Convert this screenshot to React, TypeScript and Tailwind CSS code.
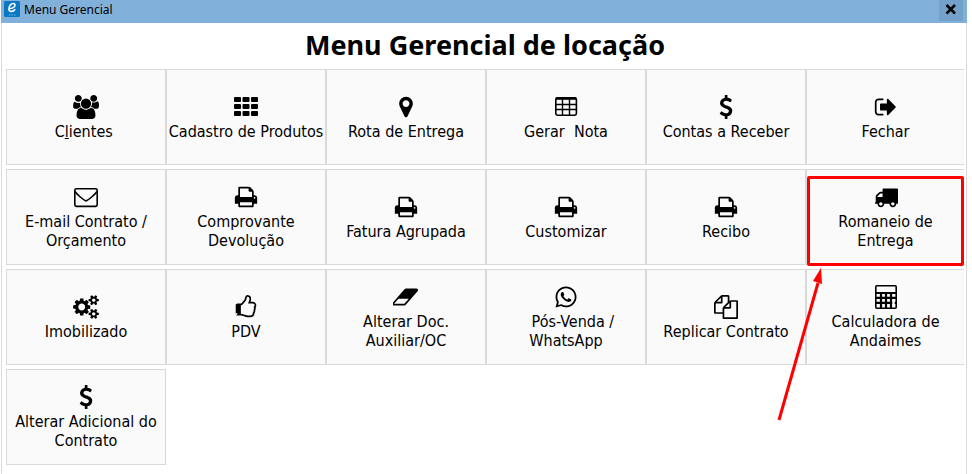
import type { ReactNode } from 'react';
import { FaWhatsapp } from 'react-icons/fa';

const FONT = "font-['Noto_Sans',Tahoma,sans-serif]";
const LABEL_FONT = "font-['DejaVu_Sans_Condensed',Tahoma,sans-serif]";

const Glyph = ({ d, wide = false }: { d: string; wide?: boolean }) => (
  <svg
    viewBox={wide ? '0 0 1920 1792' : '0 0 1792 1792'}
    className={wide ? 'h-6 w-[26px]' : 'h-6 w-6'}
    fill="currentColor"
    aria-hidden="true"
  >
    <path d={d} />
  </svg>
);

const UsersIcon = () => (
  <Glyph
    wide
    d="M593 896q-162 5-265 128h-134q-82 0-138-40.5t-56-118.5q0-353 124-353 6 0 43.5 21t97.5 42.5 119 21.5q67 0 133-23-5 37-5 66 0 159 93 293zm1071 637q0 120-73 189.5t-194 69.5h-874q-121 0-194-69.5t-73-189.5q0-53 3.5-103.5t14-109 26.5-108.5 43-97.5 62-81 85.5-53.5 111.5-20q10 0 43 21.5t73 48 107 48 135 21.5 135-21.5 107-48 73-48 43-21.5q61 0 111.5 20t85.5 53.5 62 81 43 97.5 26.5 108.5 14 109 3.5 103.5zm-1024-1277q0 106-75 181t-181 75-181-75-75-181 75-181 181-75 181 75 75 181zm704 384q0 159-112.5 271.5t-271.5 112.5-271.5-112.5-112.5-271.5 112.5-271.5 271.5-112.5 271.5 112.5 112.5 271.5zm576 225q0 78-56 118.5t-138 40.5h-134q-103-123-265-128 93-134 93-293 0-29-5-66 66 23 133 23 59 0 119-21.5t97.5-42.5 43.5-21q124 0 124 353zm-128-609q0 106-75 181t-181 75-181-75-75-181 75-181 181-75 181 75 75 181z"
  />
);

const GridIcon = () => (
  <svg viewBox="0 0 24 24" className="h-6 w-6" fill="currentColor" aria-hidden="true">
    {[2, 9, 16].map((y) =>
      [0, 8.5, 17].map((x) => <rect key={`${x}-${y}`} x={x} y={y} width="7" height="5" rx="1" />)
    )}
  </svg>
);

const PinIcon = () => (
  <Glyph d="M1152 640q0-106-75-181t-181-75-181 75-75 181 75 181 181 75 181-75 75-181zm256 0q0 109-33 179l-364 774q-16 33-47.5 52t-67.5 19-67.5-19-46.5-52l-365-774q-33-70-33-179 0-212 150-362t362-150 362 150 150 362z" />
);

const TableIcon = () => (
  <svg viewBox="0 0 24 24" className="h-6 w-6" fill="none" stroke="currentColor" aria-hidden="true">
    <rect x="1.8" y="2.8" width="20.6" height="17.4" rx="1.6" strokeWidth="1.6" />
    <path d="M2 3.6h20" strokeWidth="2.4" />
    <path d="M2 9.5h20M2 14.5h20M8.5 4v16M15.5 4v16" strokeWidth="1.4" />
  </svg>
);

const DollarIcon = () => (
  <Glyph d="M1362 1185q0 153-99.5 263.5t-258.5 136.5v175q0 14-9 23t-23 9h-135q-13 0-22.5-9.5t-9.5-22.5v-175q-66-9-127.5-31t-101.5-44.5-74-48-46.5-37.5-17.5-18q-17-21-2-41l103-135q7-10 23-12 15-2 24 9l2 2q113 99 243 125 37 8 74 8 81 0 142.5-43t61.5-122q0-28-15-53t-33.5-42-58.5-37.5-66-32-80-32.5q-39-16-61.5-25t-61.5-26.5-62.5-31-56.5-35.5-53.5-42.5-43.5-49-35.5-58-21-66.5-8.5-78q0-138 98-242t255-134v-180q0-13 9.5-22.5t22.5-9.5h135q14 0 23 9t9 23v176q57 6 110.5 23t87 33.5 63.5 37.5 39 29 15 14q17 18 5 38l-81 146q-8 15-23 16-14 3-27-7-3-3-14.5-12t-39-26.5-58.5-32-74.5-26-85.5-11.5q-95 0-155 43t-60 111q0 26 8.5 48t29.5 41.5 39.5 33 56 31 60.5 27 70 27.5q53 20 81 31.5t76 35 75.5 42.5 62 50 53 63.5 31.5 76.5 13 94z" />
);

const ExitIcon = () => (
  <Glyph d="M704 1440q0 4 1 20t.5 26.5-3 23.5-10 19.5-20.5 6.5h-320q-119 0-203.5-84.5t-84.5-203.5v-704q0-119 84.5-203.5t203.5-84.5h320q13 0 22.5 9.5t9.5 22.5q0 4 1 20t.5 26.5-3 23.5-10 19.5-20.5 6.5h-320q-66 0-113 47t-47 113v704q0 66 47 113t113 47h312l11.5 1 11.5 3 8 5.5 7 9 2 13.5zm928-544q0 26-19 45l-544 544q-19 19-45 19t-45-19-19-45v-288h-448q-26 0-45-19t-19-45v-384q0-26 19-45t45-19h448v-288q0-26 19-45t45-19 45 19l544 544q19 19 19 45z" />
);

const MailIcon = () => (
  <svg viewBox="0 0 24 24" className="h-6 w-6" fill="none" stroke="currentColor" strokeWidth="1.6" aria-hidden="true">
    <rect x="0.8" y="3.8" width="22.4" height="17.6" rx="1.6" />
    <path d="M1 6.5c2 3 8.5 8.5 11 9.5 2.5-1 9-6.5 11-9.5" />
  </svg>
);

const PrintIcon = () => (
  <Glyph d="M448 1536h896v-256h-896v256zm0-640h896v-384h-160q-40 0-68-28t-28-68v-160h-640v640zm1152 64q0-26-19-45t-45-19-45 19-19 45 19 45 45 19 45-19 19-45zm128 0v416q0 13-9.5 22.5t-22.5 9.5h-224v160q0 40-28 68t-68 28h-960q-40 0-68-28t-28-68v-160h-224q-13 0-22.5-9.5t-9.5-22.5v-416q0-79 56.5-135.5t135.5-56.5h64v-544q0-40 28-68t68-28h672q40 0 88 20t76 48l152 152q28 28 48 76t20 88v256h64q79 0 135.5 56.5t56.5 135.5z" />
);

const TruckIcon = () => (
  <Glyph d="M640 1408q0-52-38-90t-90-38-90 38-38 90 38 90 90 38 90-38 38-90zm-384-512h384v-256h-158q-13 0-22 9l-195 195q-9 9-9 22v30zm1280 512q0-52-38-90t-90-38-90 38-38 90 38 90 90 38 90-38 38-90zm256-1088v1024q0 15-4 26.5t-13.5 18.5-16.5 11.5-23.5 6-22.5 2-25.5 0-22.5-.5q0 106-75 181t-181 75-181-75-75-181h-384q0 106-75 181t-181 75-181-75-75-181h-64q-3 0-22.5.5t-25.5 0-22.5-2-23.5-6-16.5-11.5-13.5-18.5-4-26.5q0-26 19-45t45-19v-320q0-8-.5-35t0-38 2.5-34.5 6.5-37 14-30.5 22.5-30l198-198q19-19 50.5-32t58.5-13h160v-192q0-26 19-45t45-19h1024q26 0 45 19t19 45z" />
);

const CogsIcon = () => (
  <Glyph
    wide
    d="M896 896q0-106-75-181t-181-75-181 75-75 181 75 181 181 75 181-75 75-181zm768 512q0-52-38-90t-90-38-90 38-38 90q0 53 37.5 90.5t90.5 37.5 90.5-37.5 37.5-90.5zm0-1024q0-52-38-90t-90-38-90 38-38 90q0 53 37.5 90.5t90.5 37.5 90.5-37.5 37.5-90.5zm-384 421v185q0 10-7 19.5t-16 10.5l-155 24q-11 35-32 76 34 48 90 115 7 11 7 20 0 12-7 19-23 30-82.5 89.5t-78.5 59.5q-11 0-21-7l-115-90q-37 19-77 31-11 108-23 155-7 24-30 24h-186q-11 0-20-7.5t-10-17.5l-23-153q-34-10-75-31l-118 89q-7 7-20 7-11 0-21-8-144-133-144-160 0-9 7-19 10-14 41-53t47-61q-23-44-35-82l-152-24q-10-1-17-9.5t-7-19.5v-185q0-10 7-19.5t16-10.5l155-24q11-35 32-76-34-48-90-115-7-11-7-20 0-12 7-20 22-30 82-89t79-59q11 0 21 7l115 90q34-18 77-32 11-108 23-154 7-24 30-24h186q11 0 20 7.5t10 17.5l23 153q34 10 75 31l118-89q8-7 20-7 11 0 21 8 144 133 144 160 0 8-7 19-12 16-42 54t-45 60q23 48 34 82l152 23q10 2 17 10.5t7 19.5zm640 533v140q0 16-149 31-12 27-30 52 51 113 51 138 0 4-4 7-122 71-124 71-8 0-46-47t-52-68q-20 2-30 2t-30-2q-14 21-52 68t-46 47q-2 0-124-71-4-3-4-7 0-25 51-138-18-25-30-52-149-15-149-31v-140q0-16 149-31 13-29 30-52-51-113-51-138 0-4 4-7 4-2 35-20t59-34 30-16q8 0 46 46.5t52 67.5q20-2 30-2t30 2q51-71 92-112l6-2q4 0 124 70 4 3 4 7 0 25-51 138 17 23 30 52 149 15 149 31zm0-1024v140q0 16-149 31-12 27-30 52 51 113 51 138 0 4-4 7-122 71-124 71-8 0-46-47t-52-68q-20 2-30 2t-30-2q-14 21-52 68t-46 47q-2 0-124-71-4-3-4-7 0-25 51-138-18-25-30-52-149-15-149-31v-140q0-16 149-31 13-29 30-52-51-113-51-138 0-4 4-7 4-2 35-20t59-34 30-16q8 0 46 46.5t52 67.5q20-2 30-2t30 2q51-71 92-112l6-2q4 0 124 70 4 3 4 7 0 25-51 138 17 23 30 52 149 15 149 31z"
  />
);

const ThumbIcon = () => (
  <Glyph d="M256 1408q0-26-19-45t-45-19-45 19-19 45 19 45 45 19 45-19 19-45zm1280-640q0-51-39-89.5t-89-38.5h-352q0-58 48-159.5t48-160.5q0-98-32-145t-128-47q-26 26-38 85t-30.5 125.5-59.5 109.5q-22 23-77 91-4 5-23 30t-31.5 41-34.5 42.5-40 44-38.5 35.5-40 27-35.5 9h-32v640h32q13 0 31.5 3t33 6.5 38 11 35 11.5 35.5 12.5 29 10.5q211 73 342 73h121q192 0 192-167 0-26-5-56 30-16 47.5-52.5t17.5-73.5-18-69q53-50 53-119 0-25-10-55.5t-25-47.5q32-1 53.5-47t21.5-81zm128-1q0 89-49 163 9 33 9 69 0 77-38 144 3 21 3 43 0 101-60 178 1 139-85 219.5t-227 80.5h-129q-96 0-189.5-22.5t-216.5-65.5q-116-40-138-40h-288q-53 0-90.5-37.5t-37.5-90.5v-640q0-53 37.5-90.5t90.5-37.5h274q36-24 137-155 58-75 107-128 24-25 35.5-85.5t30.5-126.5 62-108q39-37 90-37 84 0 151 32.5t102 101.5 35 186q0 93-48 192h176q104 0 180 76t76 179z" />
);

const EraserIcon = () => (
  <Glyph
    wide
    d="M832 1408l336-384h-768l-336 384h768zm1013-1077q15 34 9.5 71.5t-30.5 65.5l-896 1024q-38 44-96 44h-768q-38 0-69.5-20.5t-47.5-54.5q-15-34-9.5-71.5t30.5-65.5l896-1024q38-44 96-44h768q38 0 69.5 20.5t47.5 54.5z"
  />
);

const CopyIcon = () => (
  <Glyph d="M1696 384q40 0 68 28t28 68v1216q0 40-28 68t-68 28h-960q-40 0-68-28t-28-68v-288h-544q-40 0-68-28t-28-68v-672q0-40 20-88t48-76l408-408q28-28 76-48t88-20h416q40 0 68 28t28 68v328q68-40 128-40h416zm-544 213l-299 299h299v-299zm-640-384l-299 299h299v-299zm196 647l316-316v-416h-384v416q0 40-28 68t-68 28h-416v640h512v-256q0-40 20-88t48-76zm956 804v-1152h-384v416q0 40-28 68t-68 28h-416v640h896z" />
);

const CalculatorIcon = () => (
  <svg viewBox="0 0 24 24" className="h-6 w-6" fill="none" stroke="currentColor" aria-hidden="true">
    <rect x="1.8" y="0.8" width="20.4" height="22.4" rx="1" strokeWidth="1.6" />
    <path d="M2 8h20M2 12.8h20M2 17.8h20M7 8v15M12 8v15M17 8v15" strokeWidth="2.2" />
    <path d="M19.5 14.5v7" stroke="#fafafa" strokeWidth="2.4" />
  </svg>
);

type MenuItem = { icon: ReactNode; label: ReactNode; highlight?: boolean };

const items: MenuItem[] = [
  { icon: <UsersIcon />, label: <>C<u>l</u>{'ientes '}</> },
  { icon: <GridIcon />, label: 'Cadastro de Produtos' },
  { icon: <PinIcon />, label: 'Rota de Entrega' },
  { icon: <TableIcon />, label: 'Gerar  Nota' },
  { icon: <DollarIcon />, label: 'Contas a Receber' },
  { icon: <ExitIcon />, label: 'Fechar' },
  { icon: <MailIcon />, label: 'E-mail Contrato /\nOrçamento' },
  { icon: <PrintIcon />, label: 'Comprovante\nDevolução' },
  { icon: <PrintIcon />, label: 'Fatura Agrupada' },
  { icon: <PrintIcon />, label: 'Customizar' },
  { icon: <PrintIcon />, label: 'Recibo' },
  { icon: <TruckIcon />, label: 'Romaneio de\nEntrega', highlight: true },
  { icon: <CogsIcon />, label: 'Imobilizado' },
  { icon: <ThumbIcon />, label: 'PDV' },
  { icon: <EraserIcon />, label: 'Alterar Doc.\nAuxiliar/OC' },
  { icon: <FaWhatsapp className="h-6 w-6" />, label: '   Pós-Venda /\nWhatsApp' },
  { icon: <CopyIcon />, label: 'Replicar Contrato' },
  { icon: <CalculatorIcon />, label: 'Calculadora de\nAndaimes' },
  { icon: <DollarIcon />, label: 'Alterar Adicional do\nContrato' },
];

// Red frame with the arrow pointing at it
const Callout = () => (
  <>
    <span className="pointer-events-none absolute inset-x-0 top-1.5 -bottom-0.5 z-10 rounded-xs border-3 border-[#fe0000]" />
    <svg
      viewBox="0 0 50 156"
      className="pointer-events-none absolute top-24 -left-8 z-10 h-[156px] w-[50px]"
      aria-hidden="true"
    >
      <path d="M4 154 43 17" stroke="#fe0000" strokeWidth="3" />
      <path d="M46 2 47 18 38 15z" fill="#fe0000" />
    </svg>
  </>
);

const MenuButton = ({ icon, label, highlight }: MenuItem) => (
  <button
    type="button"
    className="relative flex h-24 flex-col items-center justify-center gap-[3px] border border-[#d9d9d9] bg-[#fafafa] pt-px nth-[6n]:mr-0.5 nth-[6n]:border-r-0"
  >
    {icon}
    <span className={`text-base/[19px] whitespace-pre ${LABEL_FONT}`}>{label}</span>
    {highlight && <Callout />}
  </button>
);

export default function App() {
  return (
    <div className={`min-h-screen bg-white pl-px text-black ${FONT}`}>
      <div className="mr-[5px] flex min-h-screen flex-col">
        <header className="flex h-[23px] items-start justify-between bg-[#81b0da] pl-[3px]">
          <div className="flex items-start gap-1">
            <svg viewBox="0 0 16 16" className="mt-px h-4 w-4" aria-hidden="true">
              <rect width="16" height="16" rx="1.5" fill="#0878c4" />
              <path
                d="M4.5 7.5c3 .3 6.5-.8 6.5-3.5 0-2-3-2.200-4.800.2-2 2.800-1.700 6.300 1 6.300 1.800 0 3-1 4-2.300"
                fill="none"
                stroke="#fff"
                strokeWidth="1.6"
              />
              <path d="M5 14h1.5M7.5 14H9M10 14h1.5" stroke="#6fb4e4" />
            </svg>
            <span className="text-xs/5">Menu Gerencial</span>
          </div>
          <button type="button" aria-label="Fechar" className="mr-1 flex h-[21px] w-6 justify-center bg-[#73a1c9] pt-[3px]">
            <svg viewBox="0 0 12 12" className="h-3 w-3" aria-hidden="true">
              <path d="M1.5 2l8.5 8.5M10 2l-8.5 8.5" stroke="#000" strokeWidth="2.5" />
            </svg>
          </button>
        </header>

        <main className="flex-1 border-x border-[#d9d9d9] pr-0.5 pl-1">
          <h1 className="pb-0.5 text-center text-[27px]/[44px] font-bold">Menu Gerencial de locação</h1>
          <nav className="-mr-0.5 grid grid-cols-6 gap-y-1">
            {items.map((item, i) => (
              <MenuButton key={i} {...item} />
            ))}
          </nav>
        </main>
      </div>
    </div>
  );
}
